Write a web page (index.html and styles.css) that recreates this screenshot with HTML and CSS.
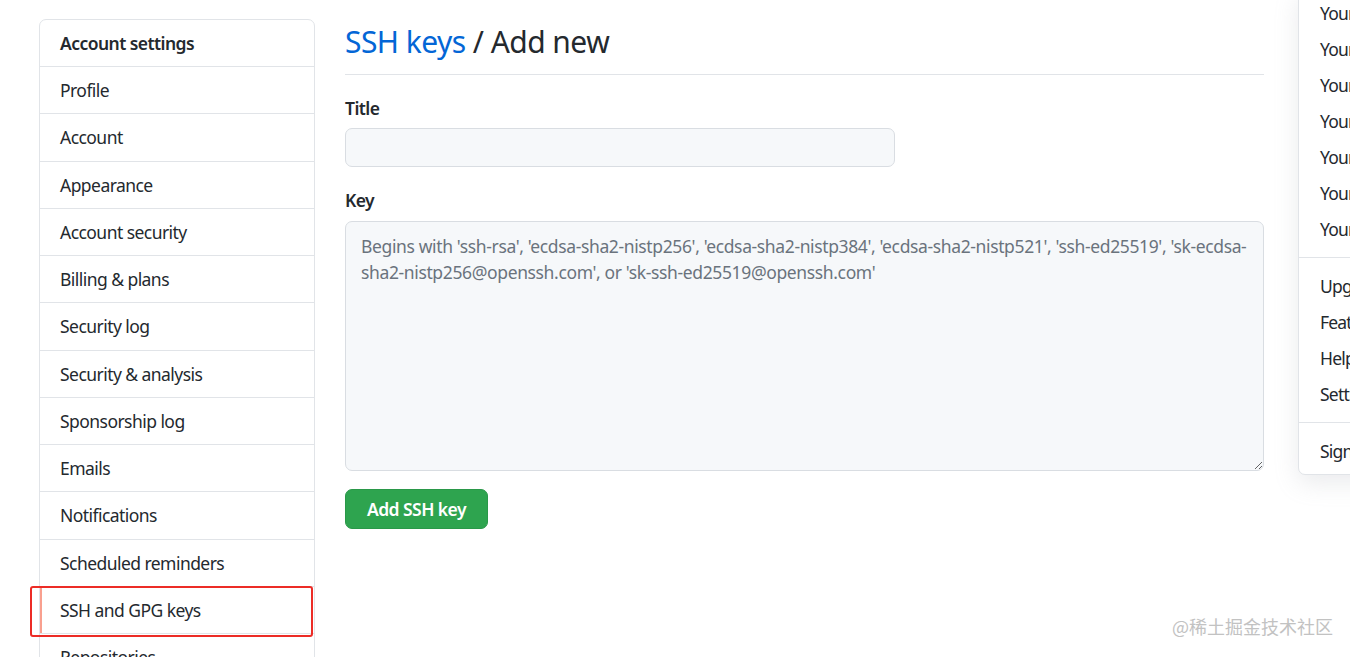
FILE: index.html
```html
<!DOCTYPE html>
<html lang="en">
<head>
<meta charset="utf-8">
<title>SSH keys / Add new</title>
<link rel="stylesheet" href="styles.css">
</head>
<body>
<div class="page">
  <nav class="menu">
    <div class="menu-heading">Account settings</div>
    <a class="menu-item">Profile</a>
    <a class="menu-item">Account</a>
    <a class="menu-item">Appearance</a>
    <a class="menu-item">Account security</a>
    <a class="menu-item">Billing &amp; plans</a>
    <a class="menu-item">Security log</a>
    <a class="menu-item">Security &amp; analysis</a>
    <a class="menu-item">Sponsorship log</a>
    <a class="menu-item">Emails</a>
    <a class="menu-item">Notifications</a>
    <a class="menu-item">Scheduled reminders</a>
    <a class="menu-item selected">SSH and GPG keys<span class="annot"></span></a>
    <a class="menu-item">Repositories</a>
  </nav>
  <main class="main">
    <div class="subhead">
      <h2 class="subhead-heading"><a class="link">SSH keys</a> / Add new</h2>
    </div>
    <form class="form">
      <label class="label" for="title">Title</label>
      <input class="input title-input" id="title" type="text">
      <label class="label key-label" for="key">Key</label>
      <textarea class="input key-input" id="key" placeholder="Begins with 'ssh-rsa', 'ecdsa-sha2-nistp256', 'ecdsa-sha2-nistp384', 'ecdsa-sha2-nistp521', 'ssh-ed25519', 'sk-ecdsa-&#10;sha2-nistp256@openssh.com', or 'sk-ssh-ed25519@openssh.com'"></textarea>
      <button class="btn" type="button">Add SSH key</button>
    </form>
  </main>
</div>

<div class="dropdown">
  <a class="dd-item">Your profile</a>
  <a class="dd-item">Your repositories</a>
  <a class="dd-item">Your codespaces</a>
  <a class="dd-item">Your organizations</a>
  <a class="dd-item">Your projects</a>
  <a class="dd-item">Your stars</a>
  <a class="dd-item">Your gists</a>
  <div class="dd-divider"></div>
  <a class="dd-item">Upgrade</a>
  <a class="dd-item">Feature preview</a>
  <a class="dd-item">Help</a>
  <a class="dd-item">Settings</a>
  <div class="dd-divider"></div>
  <a class="dd-item">Sign out</a>
</div>

<div class="watermark">@稀土掘金技术社区</div>
</body>
</html>
```

FILE: styles.css
```css
html, body {
  margin: 0;
  padding: 0;
  background: #ffffff;
  overflow: hidden;
  height: 657px;
}

body {
  font-family: "Noto Sans", "Liberation Sans", sans-serif;
  font-size: 17.5px;
  line-height: 1.5;
  letter-spacing: -0.55px;
  color: #24292e;
  position: relative;
}

.page {
  display: flex;
  align-items: flex-start;
  gap: 30px;
  padding: 19px 0 0 39px;
}

.menu {
  width: 276px;
  flex-shrink: 0;
  box-sizing: border-box;
  border: 1px solid #e1e4e8;
  border-radius: 7px;
  display: flex;
  flex-direction: column;
}

.menu-heading {
  padding: 10px 20px;
  font-weight: 600;
  line-height: 26px;
  border-bottom: 1px solid #e1e4e8;
}

.menu-item {
  position: relative;
  padding: 10px 20px;
  line-height: 26.25px;
  border-bottom: 1px solid #e1e4e8;
  color: #24292e;
}

.menu-item.selected::before {
  content: "";
  position: absolute;
  left: 0;
  top: 0;
  bottom: 0;
  width: 2px;
  background: #f9a08f;
}

.annot {
  position: absolute;
  left: -10px;
  top: -1px;
  width: 283px;
  height: 51px;
  box-sizing: border-box;
  border: 2px solid #ec2c26;
  border-radius: 3px;
}

.main {
  width: 919px;
  flex-shrink: 0;
}

.subhead {
  padding-bottom: 10px;
  border-bottom: 1px solid #e1e4e8;
}

.subhead-heading {
  margin: 0;
  font-size: 30px;
  font-weight: 400;
  line-height: 45px;
  color: #24292e;
}

.link {
  color: #0366d6;
}

.form {
  display: flex;
  flex-direction: column;
  align-items: flex-start;
  padding-top: 20px;
}

.label {
  font-weight: 600;
  line-height: 26px;
  margin-bottom: 7px;
}

.key-label {
  margin-top: 20px;
  margin-bottom: 8px;
}

.input {
  box-sizing: border-box;
  background: #f6f8fa;
  border: 1px solid #d9dde2;
  border-radius: 7px;
  font-family: inherit;
  font-size: 17.5px;
  letter-spacing: -0.55px;
  color: #24292e;
  outline: none;
}

.title-input {
  width: 550px;
  height: 39px;
  padding: 5px 15px;
}

.key-input {
  width: 919px;
  height: 250px;
  padding: 11px 15px;
  line-height: 26px;
  letter-spacing: -0.37px;
  resize: vertical;
}

.key-input::placeholder {
  color: #6a737d;
  opacity: 1;
}

.btn {
  margin-top: 18px;
  height: 40px;
  padding: 0 21px;
  background: #2ea44f;
  color: #ffffff;
  border: 1px solid #2a9849;
  border-radius: 7px;
  font-family: inherit;
  font-size: 17.5px;
  font-weight: 600;
  letter-spacing: -0.55px;
  cursor: pointer;
}

.dropdown {
  position: absolute;
  left: 1298px;
  top: -11px;
  width: 230px;
  padding: 5px 0;
  background: #ffffff;
  border: 1px solid #e1e4e8;
  border-radius: 7px;
  box-shadow: 0 8px 24px rgba(149, 157, 165, 0.2);
  display: flex;
  flex-direction: column;
}

.dd-item {
  display: block;
  height: 36px;
  line-height: 36px;
  padding: 0 10px 0 21px;
  color: #24292e;
  letter-spacing: -0.8px;
  white-space: nowrap;
}

.dd-divider {
  height: 1px;
  margin: 10px 0;
  background: #e1e4e8;
}

.watermark {
  position: absolute;
  left: 1172px;
  top: 612px;
  font-family: "Noto Sans CJK SC", sans-serif;
  font-size: 18px;
  line-height: 28px;
  color: #c2c2c2;
  letter-spacing: 0;
}
```
